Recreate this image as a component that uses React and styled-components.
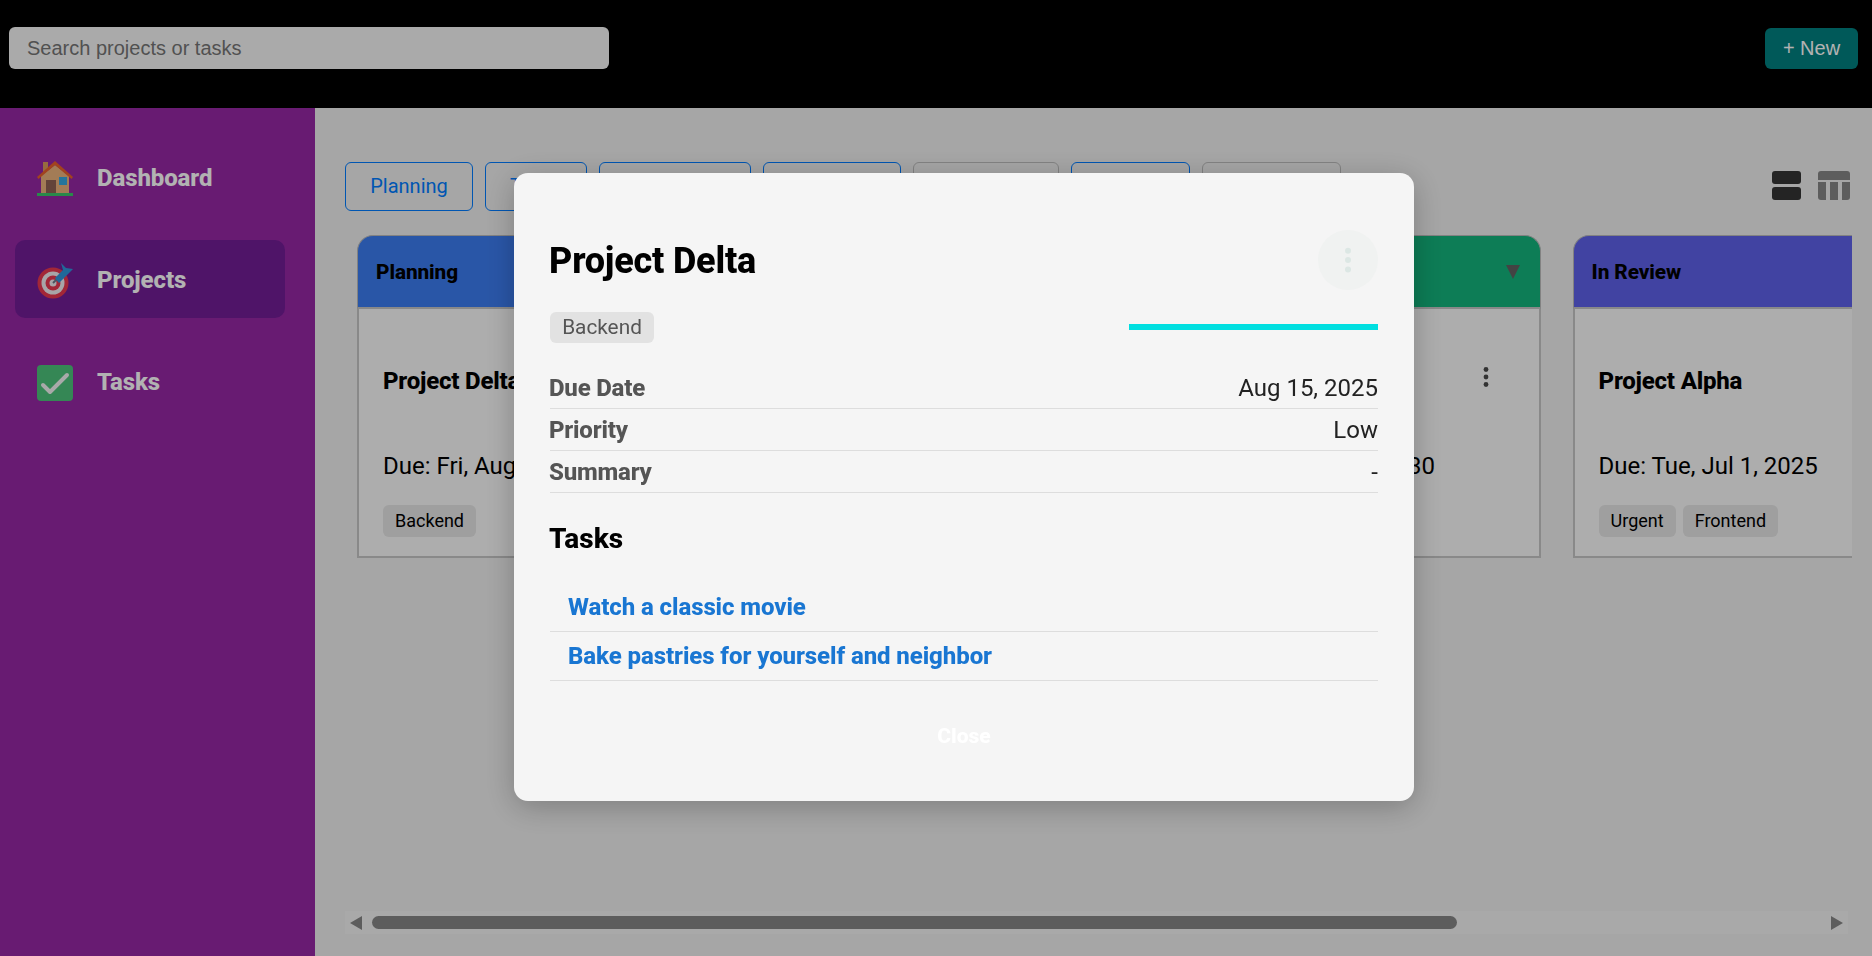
import styled, { createGlobalStyle } from 'styled-components';

const GlobalStyle = createGlobalStyle`
  html, body {
    margin: 0;
    height: 100%;
    overflow: hidden;
    font-family: Roboto, "Liberation Sans", sans-serif;
  }
  * { box-sizing: border-box; }
`;

const HouseIcon = () => (
  <svg width="36" height="36" viewBox="0 0 36 36">
    <rect x="6" y="1" width="5" height="12" fill="#d99a5b" />
    <path d="M4 15 18 4l14 11v18H4z" fill="#eab27c" />
    <path d="M0 16 18 0l18 16-1.5 2L18 4 1.5 18z" fill="#e8602c" />
    <rect x="9" y="19" width="10" height="14" fill="#8f6152" />
    <rect x="22" y="16" width="8" height="8" fill="#35a8e0" />
    <rect x="0" y="32" width="36" height="3" fill="#3cc46a" />
  </svg>
);

const TargetIcon = () => (
  <svg width="36" height="36" viewBox="0 0 36 36">
    <circle cx="16" cy="20" r="15.5" fill="#e8384f" />
    <circle cx="16" cy="20" r="11.5" fill="#f1ecf0" />
    <circle cx="16" cy="20" r="7.5" fill="#e8384f" />
    <circle cx="16" cy="20" r="3.5" fill="#f1ecf0" />
    <path d="M16 20 27 9" stroke="#6a7a88" strokeWidth="2" />
    <path d="M18 15 26 7 24 0l5 5 7 1-7 7-1 1-6 6z" fill="#2f96dc" />
  </svg>
);

const CheckIcon = () => (
  <svg width="36" height="36" viewBox="0 0 36 36">
    <rect width="36" height="36" rx="4" fill="#4cc27a" />
    <path d="M6 20l7 7L30 10" fill="none" stroke="#f2f2f2" strokeWidth="4" strokeLinecap="round" strokeLinejoin="round" />
  </svg>
);

const navItems = [
  { label: 'Dashboard', icon: <HouseIcon /> },
  { label: 'Projects', icon: <TargetIcon />, active: true },
  { label: 'Tasks', icon: <CheckIcon /> },
];

const tabs = [
  { label: 'Planning', width: 128, on: true },
  { label: 'To Do', width: 102, on: true },
  { label: 'In Progress', width: 152, on: true },
  { label: 'In Review', width: 138, on: true },
  { label: 'Completed', width: 146 },
  { label: 'Backlog', width: 119, on: true },
  { label: 'Archived', width: 139 },
];

const columns = [
  {
    title: 'Planning',
    color: '#3c7cf0',
    card: { title: 'Project Delta', due: 'Due: Fri, Aug 15, 2025', tags: ['Backend'] },
  },
  {
    title: 'In Progress',
    color: '#f0a03c',
    card: { title: 'Project Beta', due: 'Due: Mon, Jul 14, 2025', tags: ['Frontend'] },
  },
  {
    title: 'Active',
    color: '#13b37b',
    card: { title: 'Project Gamma', due: 'Due: Wed, Sep 2, 10:30', tags: ['Urgent'] },
  },
  {
    title: 'In Review',
    color: '#5e61e8',
    card: { title: 'Project Alpha', due: 'Due: Tue, Jul 1, 2025', tags: ['Urgent', 'Frontend'] },
  },
];

const details = [
  { label: 'Due Date', value: 'Aug 15, 2025' },
  { label: 'Priority', value: 'Low' },
  { label: 'Summary', value: '-' },
];

const tasks = ['Watch a classic movie', 'Bake pastries for yourself and neighbor'];

function Dots({ size, color }) {
  return (
    <svg width={size} height={size} viewBox="0 0 24 24" fill={color}>
      <circle cx="12" cy="4.5" r="2.4" />
      <circle cx="12" cy="12" r="2.4" />
      <circle cx="12" cy="19.5" r="2.4" />
    </svg>
  );
}

function App() {
  return (
    <>
      <GlobalStyle />
      <Page>
        <TopBar>
          <SearchInput placeholder="Search projects or tasks" />
          <NewButton>+ New</NewButton>
        </TopBar>
        <Body>
          <Sidebar>
            {navItems.map((item) => (
              <NavItem key={item.label} $active={item.active}>
                <NavIcon>{item.icon}</NavIcon>
                {item.label}
              </NavItem>
            ))}
          </Sidebar>
          <Main>
            <Toolbar>
              <Tabs>
                {tabs.map((tab) => (
                  <Tab key={tab.label} $width={tab.width} $on={tab.on}>
                    {tab.label}
                  </Tab>
                ))}
              </Tabs>
              <ViewIcons>
                <svg width="29" height="29" viewBox="0 0 29 29" fill="#343434">
                  <rect width="29" height="13" rx="3" />
                  <rect y="16" width="29" height="13" rx="3" />
                </svg>
                <svg width="32" height="29" viewBox="0 0 32 29" fill="#868686">
                  <path d="M3 0h26a3 3 0 0 1 3 3v6H0V3a3 3 0 0 1 3-3z" />
                  <path d="M0 11h8v18H3a3 3 0 0 1-3-3z" />
                  <rect x="12" y="11" width="8" height="18" />
                  <path d="M24 11h8v15a3 3 0 0 1-3 3h-5z" />
                </svg>
              </ViewIcons>
            </Toolbar>
            <Board>
              {columns.map((col) => (
                <Column key={col.title}>
                  <ColumnHeader $color={col.color}>
                    {col.title}
                    <Caret />
                  </ColumnHeader>
                  <Card>
                    <CardTop>
                      <CardTitle>{col.card.title}</CardTitle>
                      <CardMenu>
                        <Dots size={24} color="#4a4a4a" />
                      </CardMenu>
                    </CardTop>
                    <CardDue>{col.card.due}</CardDue>
                    <CardTags>
                      {col.card.tags.map((tag) => (
                        <CardTag key={tag}>{tag}</CardTag>
                      ))}
                    </CardTags>
                  </Card>
                </Column>
              ))}
            </Board>
            <ScrollBar>
              <ArrowLeft />
              <ScrollTrack>
                <ScrollThumb />
              </ScrollTrack>
              <ArrowRight />
            </ScrollBar>
          </Main>
        </Body>
      </Page>

      <Overlay>
        <Modal>
          <ModalHead>
            <ModalTitle>Project Delta</ModalTitle>
            <ModalMenu>
              <Dots size={30} color="#dce7e4" />
            </ModalMenu>
          </ModalHead>
          <ModalMeta>
            <ModalTag>Backend</ModalTag>
            <Progress />
          </ModalMeta>
          <Details>
            {details.map((row) => (
              <DetailRow key={row.label}>
                <DetailLabel>{row.label}</DetailLabel>
                <DetailValue>{row.value}</DetailValue>
              </DetailRow>
            ))}
          </Details>
          <TasksHeading>Tasks</TasksHeading>
          <TaskList>
            {tasks.map((task) => (
              <TaskRow key={task}>{task}</TaskRow>
            ))}
          </TaskList>
          <CloseButton>Close</CloseButton>
        </Modal>
      </Overlay>
    </>
  );
}

const Page = styled.div`
  display: flex;
  flex-direction: column;
  height: 100vh;
`;

const TopBar = styled.header`
  height: 108px;
  flex: none;
  background: #000;
  display: flex;
  align-items: center;
  justify-content: space-between;
  padding: 0 14px 12px 9px;
`;

const SearchInput = styled.input`
  width: 600px;
  height: 42px;
  padding: 0 18px;
  border: 0;
  border-radius: 6px;
  background: #f4f4f4;
  font: 20px "Liberation Sans", Arial, sans-serif;
  &::placeholder { color: #757575; }
`;

const NewButton = styled.button`
  width: 93px;
  height: 41px;
  border: 0;
  border-radius: 6px;
  background: #008080;
  color: #fff;
  font: 20px "Liberation Sans", Arial, sans-serif;
`;

const Body = styled.div`
  flex: 1;
  display: flex;
  min-height: 0;
`;

const Sidebar = styled.nav`
  width: 315px;
  flex: none;
  background: #9527a4;
  padding: 30px 30px 0 15px;
  display: flex;
  flex-direction: column;
  gap: 24px;
`;

const NavItem = styled.a`
  height: 78px;
  display: flex;
  align-items: center;
  gap: 24px;
  padding: 2px 0 0 22px;
  border-radius: 10px;
  background: ${({ $active }) => ($active ? '#721d96' : 'transparent')};
  color: #fff;
  font-size: 24px;
  font-weight: 800;
  letter-spacing: -0.1px;
`;

const NavIcon = styled.span`
  width: 36px;
  height: 36px;
  margin-top: 1px;
  display: flex;
`;

const Main = styled.main`
  flex: 1;
  min-width: 0;
  background: #eee;
  padding: 54px 20px 22px 30px;
  display: flex;
  flex-direction: column;
`;

const Toolbar = styled.div`
  display: flex;
  justify-content: space-between;
  align-items: flex-start;
`;

const Tabs = styled.div`
  display: flex;
  gap: 12px;
`;

const Tab = styled.button`
  width: ${({ $width }) => $width}px;
  height: 49px;
  padding: 0 0 2px;
  background: transparent;
  border: 1.5px solid ${({ $on }) => ($on ? '#007bff' : '#bbb')};
  border-radius: 6px;
  color: ${({ $on }) => ($on ? '#007bff' : '#999')};
  font: 20px Roboto, sans-serif;
`;

const ViewIcons = styled.div`
  display: flex;
  gap: 17px;
  padding: 9px 2px 0 0;
`;

const Board = styled.div`
  flex: 1;
  min-height: 0;
  margin-top: 24px;
  padding-left: 12px;
  display: flex;
  align-items: flex-start;
  gap: 31.5px;
  overflow: hidden;
`;

const Column = styled.section`
  width: 373.7px;
  flex: none;
`;

const ColumnHeader = styled.div`
  height: 74px;
  padding: 0 18px;
  display: flex;
  align-items: center;
  justify-content: space-between;
  background: ${({ $color }) => $color};
  border: 1px solid #bbb;
  border-bottom: 2px solid #c4c4c4;
  border-radius: 16px 16px 0 0;
  color: #000;
  font-size: 20.8px;
  font-weight: 800;
  letter-spacing: -0.1px;
`;

const Caret = styled.span`
  width: 0;
  height: 0;
  margin-right: 2px;
  border-left: 7px solid transparent;
  border-right: 7px solid transparent;
  border-top: 14px solid #616161;
`;

const Card = styled.div`
  height: 249px;
  padding: 46px 20px 19px 24px;
  background: #f8f8f8;
  border: 2px solid #c4c4c4;
  border-top: 0;
`;

const CardTop = styled.div`
  height: 52px;
  display: flex;
  justify-content: space-between;
  align-items: center;
`;

const CardTitle = styled.h3`
  margin: 0;
  color: #000;
  font-size: 24px;
  font-weight: 800;
  letter-spacing: -0.2px;
`;

const CardMenu = styled.span`
  align-self: flex-start;
  width: 40px;
  height: 40px;
  margin: 2px 13px 0 0;
  display: flex;
  align-items: center;
  justify-content: center;
`;

const CardDue = styled.div`
  margin-top: 46px;
  height: 26px;
  line-height: 26px;
  color: #000;
  font-size: 24px;
  white-space: nowrap;
`;

const CardTags = styled.div`
  margin-top: 26px;
  display: flex;
  gap: 7px;
`;

const CardTag = styled.span`
  height: 32px;
  line-height: 32px;
  padding: 0 12px;
  border-radius: 6px;
  background: #e4e4e4;
  color: #000;
  font-size: 18px;
`;

const ScrollBar = styled.div`
  height: 23px;
  flex: none;
  margin-right: 4px;
  padding: 0 5px;
  background: #f3f3f3;
  display: flex;
  align-items: center;
  gap: 10px;
`;

const ArrowLeft = styled.span`
  width: 0;
  height: 0;
  border-top: 7px solid transparent;
  border-bottom: 7px solid transparent;
  border-right: 12px solid #868686;
`;

const ArrowRight = styled(ArrowLeft)`
  border-right: 0;
  border-left: 12px solid #868686;
`;

const ScrollTrack = styled.div`
  flex: 1;
`;

const ScrollThumb = styled.div`
  width: 1085px;
  height: 13px;
  border-radius: 7px;
  background: #868686;
`;

const Overlay = styled.div`
  position: fixed;
  inset: 0;
  padding: 18px 0 0 56px;
  background: rgba(0, 0, 0, 0.3);
  display: flex;
  align-items: center;
  justify-content: center;
`;

const Modal = styled.div`
  width: 900px;
  height: 628px;
  padding: 57px 36px 43px;
  background: #f5f5f5;
  border-radius: 14px;
  box-shadow: 0 6px 30px rgba(0, 0, 0, 0.25);
  display: flex;
  flex-direction: column;
`;

const ModalHead = styled.div`
  height: 60px;
  display: flex;
  justify-content: space-between;
  align-items: center;
`;

const ModalTitle = styled.h2`
  margin: 2px 0 0 -1px;
  color: #000;
  font-size: 36px;
  font-weight: 800;
  letter-spacing: -0.2px;
`;

const ModalMenu = styled.span`
  width: 60px;
  height: 60px;
  border-radius: 50%;
  background: #f0f2f1;
  display: flex;
  align-items: center;
  justify-content: center;
`;

const ModalMeta = styled.div`
  margin-top: 22px;
  display: flex;
  justify-content: space-between;
  align-items: center;
`;

const ModalTag = styled.span`
  height: 31px;
  width: 104px;
  line-height: 31px;
  text-align: center;
  border-radius: 6px;
  background: #e2e2e2;
  color: #555;
  font-size: 20.8px;
`;

const Progress = styled.div`
  width: 249px;
  height: 6px;
  margin-top: -2px;
  background: #00dfe0;
`;

const Details = styled.div`
  margin-top: 24px;
`;

const DetailRow = styled.div`
  height: 42px;
  display: flex;
  justify-content: space-between;
  align-items: center;
  border-bottom: 1px solid #ddd;
`;

const DetailLabel = styled.span`
  margin-left: -1px;
  color: #555;
  font-size: 24px;
  font-weight: 800;
  letter-spacing: -0.2px;
`;

const DetailValue = styled.span`
  color: #222;
  font-size: 24px;
`;

const TasksHeading = styled.h3`
  margin: 29px 0 0 -1px;
  height: 34px;
  line-height: 34px;
  color: #000;
  font-size: 28px;
  font-weight: 800;
`;

const TaskList = styled.div`
  margin-top: 27px;
`;

const TaskRow = styled.a`
  display: flex;
  align-items: center;
  height: 49px;
  padding-left: 18px;
  border-bottom: 1px solid #ddd;
  color: #1976d2;
  font-size: 24px;
  font-weight: 800;
  letter-spacing: -0.08px;
`;

const CloseButton = styled.button`
  margin-top: 33px;
  height: 44px;
  align-self: center;
  border: 0;
  background: transparent;
  color: #fff;
  font: 800 21px Roboto, sans-serif;
`;

export default App;
